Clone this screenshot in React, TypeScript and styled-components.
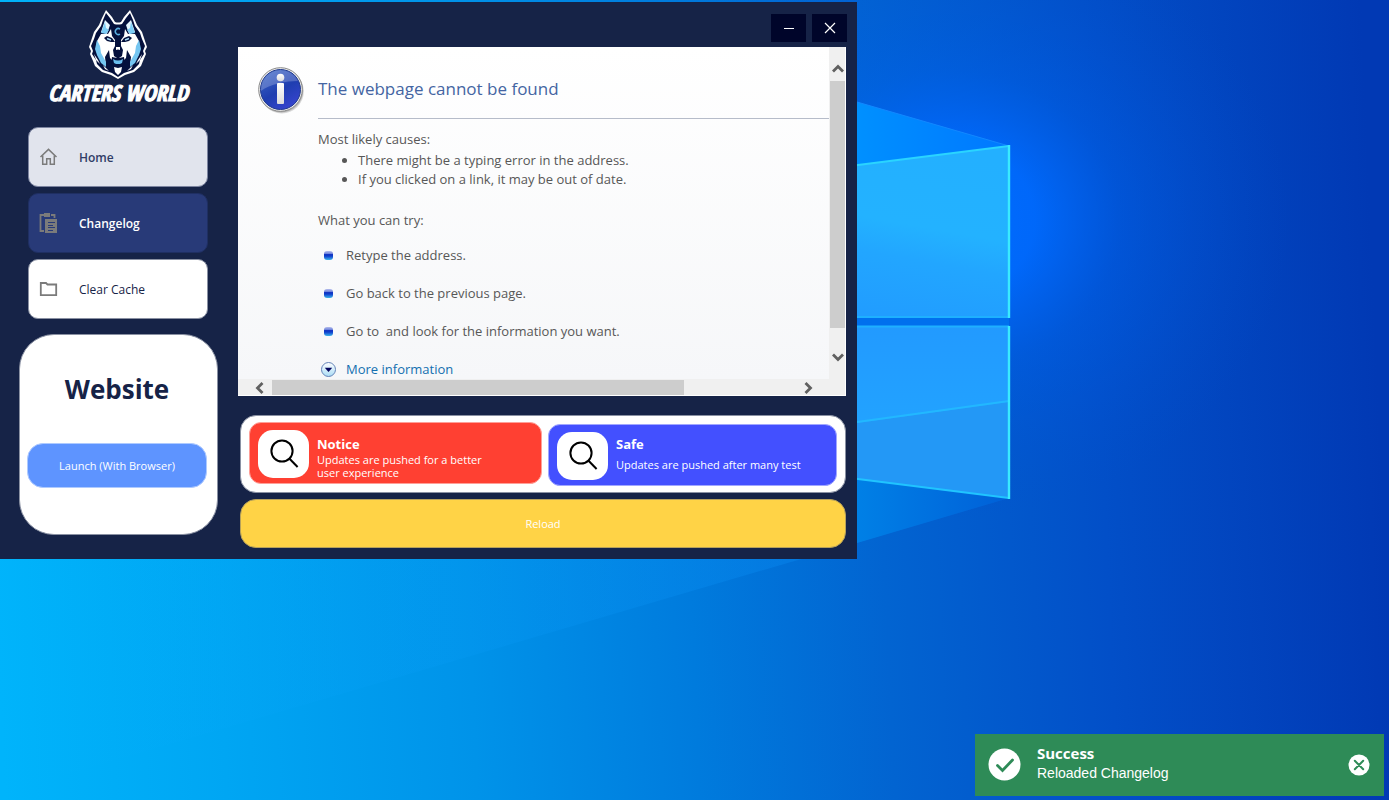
import React from 'react';
import styled, { createGlobalStyle } from 'styled-components';

const UI_FONT = '"Open Sans", "Noto Sans", sans-serif';

const GlobalStyle = createGlobalStyle`
  *, *::before, *::after { box-sizing: border-box; }
  body { margin: 0; background: #0350c8; font-family: ${UI_FONT}; }
  button { font: inherit; color: inherit; border: 0; padding: 0; background: none; cursor: pointer; }
  h1, h2, p, ul { margin: 0; padding: 0; }
`;

const Desktop = styled.main`
  position: relative;
  min-height: 100vh;
  overflow: hidden;
  display: flex;
  flex-direction: column;
  justify-content: space-between;
  align-items: flex-start;
  padding: 2px 5px 4px 0;
`;

const Wallpaper = styled.svg`
  position: absolute;
  inset: 0;
  width: 100%;
  height: 100%;
`;

const AppWindow = styled.section`
  position: relative;
  display: grid;
  grid-template-columns: 238px minmax(0, 1fr);
  width: 100%;
  max-width: 857px;
  background: #162347;
`;

const Sidebar = styled.aside`
  display: flex;
  flex-direction: column;
  align-items: center;
  padding: 8px 21px 24px 19px;
`;

const Brand = styled.div`
  display: flex;
  flex-direction: column;
  align-items: center;
  height: 117px;
`;

const BrandName = styled.h1`
  font: italic 700 22px/24px "Liberation Sans Narrow", "Open Sans Condensed", "DejaVu Sans Condensed", sans-serif;
  color: #fff;
  -webkit-text-stroke: 1px #fff;
  white-space: nowrap;
`;

const Nav = styled.nav`
  display: flex;
  flex-direction: column;
  gap: 6px;
  width: 180px;
`;

const NavButton = styled.button<{ $bg: string; $edge: string; $color: string; $bold?: boolean }>`
  display: flex;
  align-items: center;
  gap: 20px;
  height: 60px;
  padding: 0 10px;
  border: 1px solid ${p => p.$edge};
  border-radius: 10px;
  background: ${p => p.$bg};
  color: ${p => p.$color};
  font-size: 12px;
  font-weight: ${p => (p.$bold ? 600 : 400)};
`;

const SiteCard = styled.section`
  display: flex;
  flex-direction: column;
  align-items: center;
  width: 199px;
  height: 201px;
  margin-top: 15px;
  padding: 36px 8px 0 6px;
  border: 1px solid #8a91a3;
  border-radius: 35px;
  background: #fff;
`;

const SiteTitle = styled.h2`
  font-size: 26px;
  line-height: 36px;
  font-weight: 700;
  color: #162347;
  margin-bottom: 36px;
`;

const LaunchButton = styled.button`
  width: 180px;
  height: 45px;
  border: 1px solid #aecaff;
  border-radius: 16px;
  background: #5e94ff;
  color: #fff;
  font-size: 11px;
`;

const Content = styled.div`
  display: flex;
  flex-direction: column;
  padding: 12px 11px 11px 0;
`;

const Caption = styled.header`
  display: flex;
  justify-content: flex-end;
  gap: 6px;
  height: 33px;
  margin-right: -1px;
`;

const CaptionButton = styled.button`
  display: grid;
  place-items: center;
  width: 35px;
  height: 28px;
  background: #00052a;
`;

const Browser = styled.div`
  display: grid;
  grid-template-columns: minmax(0, 1fr) 16px;
  grid-template-rows: 332px 16px;
  border: solid #fff;
  border-width: 0 1px 1px 0;
  background: #f0f0f0;
`;

const Page = styled.article`
  display: grid;
  grid-template-columns: 60px minmax(0, 1fr);
  align-content: start;
  padding: 20px 0 0 20px;
  overflow: hidden;
  background: linear-gradient(#fff, #f6f7f9);
  color: #575757;
  font-size: 13px;
  line-height: 19px;
`;

const PageTitle = styled.h2`
  height: 52px;
  border-bottom: 1px solid #b6bcc9;
  margin-bottom: 11px;
  color: #4465a2;
  font-size: 17px;
  line-height: 44px;
  font-weight: 400;
`;

const PageBody = styled.div`
  grid-column: 2;
`;

const Causes = styled.ul`
  padding-left: 40px;
  margin: 2px 0 22px;
`;

const Tips = styled.ul`
  list-style: none;
  margin-top: 16px;
  display: grid;
  gap: 19px;
`;

const Tip = styled.li`
  display: flex;
  align-items: center;
  gap: 10px;
  padding-left: 2px;
  white-space: pre;

  a { color: #136fb0; text-decoration: none; }
`;

const TipMark = styled.svg`
  flex: none;
  width: 16px;
  height: 16px;
`;

const VScroll = styled.div`
  display: flex;
  flex-direction: column;
  padding: 13px 0 14px 1px;
`;

const HScroll = styled.div`
  display: flex;
  padding: 1px 13px 0 13px;
`;

const ScrollButton = styled.button`
  display: grid;
  place-items: center;
  flex: none;
  width: 15px;
  height: 17px;
`;

const ScrollStep = styled(ScrollButton)`
  width: 17px;
  height: 15px;
`;

const VThumb = styled.div`
  height: 247px;
  margin: 4px 0 auto;
  background: #cdcdcd;
`;

const HThumb = styled.div`
  flex: 0 1 412px;
  height: 15px;
  margin: 0 auto 0 4px;
  background: #cdcdcd;
`;

const Cards = styled.div`
  display: grid;
  grid-template-columns: 293fr 289fr;
  gap: 6px;
  height: 78px;
  margin: 19px 0 6px 2px;
  padding: 6px 8px;
  border: 1px solid #8a91a3;
  border-radius: 16px;
  background: #fff;
`;

const Card = styled.section<{ $bg: string; $edge: string; $drop?: boolean }>`
  display: flex;
  gap: 8px;
  height: 62px;
  margin-top: ${p => (p.$drop ? 2 : 0)}px;
  padding: 7px 8px;
  border: 1px solid ${p => p.$edge};
  border-radius: 12px;
  background: ${p => p.$bg};
  color: #fff;
`;

const CardIcon = styled.div`
  display: grid;
  place-items: center;
  flex: none;
  width: 51px;
  height: 48px;
  border-radius: 15px;
  background: #fff;
`;

const CardText = styled.div<{ $raised?: boolean }>`
  margin-top: ${p => (p.$raised ? 3 : 5)}px;
`;

const CardTitle = styled.h2`
  font-size: 13px;
  line-height: 18px;
  font-weight: 700;
`;

const CardNote = styled.p<{ $gap?: boolean }>`
  margin-top: ${p => (p.$gap ? 5 : 0)}px;
  max-width: 186px;
  font-size: 11px;
  line-height: 13px;
`;

const ReloadButton = styled.button`
  height: 49px;
  margin-left: 2px;
  border: 1px solid #b7a15a;
  border-radius: 16px;
  background: #ffd346;
  color: #fff;
  font-size: 11px;
`;

const Toast = styled.aside`
  position: relative;
  display: flex;
  align-items: center;
  align-self: flex-end;
  width: 409px;
  height: 62px;
  padding: 0 14px 1px 13px;
  background: #2e8b57;
  color: #fff;
`;

const ToastText = styled.div`
  flex: 1;
  margin-left: 16px;
  padding-bottom: 4px;
`;

const ToastTitle = styled.h2`
  font-size: 15px;
  line-height: 20px;
  font-weight: 700;
`;

const ToastNote = styled.p`
  font: 14px/20px "Liberation Sans", sans-serif;
`;

const ToastClose = styled.button`
  display: grid;
`;

const WolfLogo = () => (
  <svg width="58" height="70" viewBox="0 0 58 70" aria-hidden="true">
    <path d="M17 0 L23 7 L26 12 Q29 13 32 12 L35 7 L41 0 L45 8 L48 15 L53 22 L55 28 L58 37 L56 41 L57 44 L54 51 L52 56 L45 62 L36 65 L29 69 L22 65 L13 62 L6 56 L4 51 L1 44 L2 41 L0 37 L3 28 L5 22 L10 15 L13 8 Z" fill="#fff" />
    <path d="M17 3 L21 8 L25 14 Q29 15 33 14 L37 8 L41 3 L44 10 L46 16 L51 23 L53 29 L56 36 L54 41 L55 44 L51 50 L50 54 L44 60 L35 63 L29 67 L23 63 L14 60 L8 54 L7 50 L3 44 L4 41 L2 36 L5 29 L7 23 L12 16 L14 10 Z" fill="#04103c" />
    <path d="M16 10 L21 15 L18 24 L12 22 Z M42 10 L37 15 L40 24 L46 22 Z" fill="#e4f6ff" />
    <path d="M16 12 L17 18 L20 20 L17 24 L12 23 Z M42 12 L41 18 L38 20 L41 24 L46 23 Z" fill="#7ccdf6" />
    <path d="M12 24 L19 24 L22 19 L23 26 L26 30 L26 36 L24 40 L25 46 L28 48 H30 L33 46 L34 40 L32 36 L32 30 L35 26 L36 19 L39 24 L46 24 L50 31 L51 38 L49 46 L44 53 L41 56 L42 47 L38 40 L37 48 L34 51 H24 L21 48 L20 40 L16 47 L17 56 L14 53 L9 46 L7 38 L8 31 Z" fill="#fff" />
    <path d="M27 37 H31 V43 H27 Z" fill="#fff" />
    <path d="M8 30 L11 36 L12 43 L17 52 L17 57 L12 53 L8 45 L6 39 Z M50 30 L47 36 L46 43 L41 52 L41 57 L46 53 L50 45 L52 39 Z" fill="#75c6f1" />
    <path d="M15 28 L18 26 L23 28 L26 32 L22 32 L18 31 Z M43 28 L40 26 L35 28 L32 32 L36 32 L40 31 Z" fill="#04103c" />
    <path d="M18 28.500 L22 30 M40 28.500 L36 30" stroke="#a9dcf7" strokeWidth="1.400" />
    <path d="M25 41 Q29 38 33 41 L32 44 L29 46 L26 44 Z" fill="#04103c" />
    <path d="M23 47 L28 48 L29 47 L30 48 L35 47 L36 54 L32 57 H26 L22 54 Z" fill="#04103c" />
    <path d="M24 49 Q29 52 34 49 L33 53 L31 54 H27 L25 53 Z" fill="#69bdec" />
    <path d="M25 57 L29 58 L33 57 L32 62 L29 65 L26 62 Z M5 44 L9 50 L11 54 L7 50 Z M53 44 L49 50 L47 54 L51 50 Z M14 55 L20 61 L16 59 Z M44 55 L38 61 L42 59 Z" fill="#fff" />
    <path d="M31 19 A3 3 0 1 0 31 24" fill="none" stroke="#5aaee0" strokeWidth="1.500" />
  </svg>
);

const HomeIcon = () => (
  <svg width="20" height="20" viewBox="0 0 20 20" fill="none" stroke="#7b7b7b" strokeWidth="1.5" aria-hidden="true">
    <path d="M1.5 10 L9.5 2.4 L17.5 10" />
    <path d="M3.7 8.5 V17.2 H7.7 V11.7 H11.3 V17.2 H15.3 V8.5" />
  </svg>
);

const ChangelogIcon = () => (
  <svg width="20" height="22" viewBox="0 0 20 22" aria-hidden="true">
    <path d="M5 3 H1.5 V19 H5 M12 3 H15.5 V6" fill="none" stroke="#7b7b7b" strokeWidth="1.8" />
    <path d="M5 1 H11 V5 H5 Z M6 7 H18 V21 H6 Z" fill="#7b7b7b" />
    <path d="M9 10.5 H16 M9 13.5 H14 M9 15.5 H16 M9 18.5 H14" stroke="#283a78" />
  </svg>
);

const FolderIcon = () => (
  <svg width="20" height="20" viewBox="0 0 20 20" fill="none" stroke="#7b7b7b" strokeWidth="1.8" aria-hidden="true">
    <path d="M1.8 4 H7 L8.5 5.5 H17.2 V16.2 H1.8 Z" />
  </svg>
);

const SearchIcon = () => (
  <svg width="30" height="30" viewBox="0 0 30 30" fill="none" stroke="#000" strokeWidth="2" aria-hidden="true">
    <circle cx="13" cy="12" r="10.6" />
    <path d="M20.3 19.5 L28.6 28" />
  </svg>
);

const InfoIcon = () => (
  <svg width="48" height="48" viewBox="0 0 48 48" aria-hidden="true">
    <defs>
      <linearGradient id="infoFill" x1="0" y1="0" x2="0.6" y2="1">
        <stop offset="0" stopColor="#3f6bc8" />
        <stop offset="0.6" stopColor="#1f3eb0" />
        <stop offset="1" stopColor="#3444cc" />
      </linearGradient>
      <linearGradient id="infoGlyph" x1="0" y1="0" x2="0" y2="1">
        <stop offset="0" stopColor="#fff" />
        <stop offset="1" stopColor="#dcdcdc" />
      </linearGradient>
    </defs>
    <circle cx="23.8" cy="24.4" r="22" fill="#000" opacity="0.15" />
    <circle cx="23.2" cy="23.4" r="22" fill="#a9a9a9" opacity="0.8" />
    <circle cx="22.5" cy="22.5" r="21.8" fill="#f4f4f4" stroke="#868686" />
    <circle cx="22.5" cy="22.5" r="20" fill="url(#infoFill)" stroke="#213a8c" />
    <path d="M3 24 A19.5 19.5 0 0 1 40 14 C28 14 12 17 3 24 Z" fill="#fff" opacity="0.22" />
    <circle cx="22.5" cy="10.5" r="3.8" fill="url(#infoGlyph)" />
    <rect x="19" y="16" width="7" height="21" rx="1" fill="url(#infoGlyph)" />
  </svg>
);

const Bullet = () => (
  <TipMark viewBox="0 0 16 16" aria-hidden="true">
    <defs>
      <linearGradient id="bullet" x1="0" y1="0" x2="0" y2="1">
        <stop offset="0" stopColor="#b5bdec" />
        <stop offset="0.3" stopColor="#6d82dc" />
        <stop offset="0.4" stopColor="#0a2cc0" />
        <stop offset="0.6" stopColor="#1248d0" />
        <stop offset="1" stopColor="#3cb4ea" />
      </linearGradient>
    </defs>
    <rect x="4" y="3" width="9" height="9" rx="3" fill="url(#bullet)" />
  </TipMark>
);

const MoreIcon = () => (
  <TipMark viewBox="0 0 16 16" aria-hidden="true">
    <defs>
      <linearGradient id="moreFill" x1="0" y1="0" x2="0" y2="1">
        <stop offset="0" stopColor="#fff" />
        <stop offset="1" stopColor="#a9dbf5" />
      </linearGradient>
    </defs>
    <circle cx="8.5" cy="7.5" r="7" fill="url(#moreFill)" stroke="#6483b8" />
    <path d="M4.8 5.8 H12.2 L8.5 10 Z" fill="#04045c" />
  </TipMark>
);

const Chevron = ({ d }: { d: string }) => (
  <svg width="14" height="14" viewBox="0 0 14 14" fill="none" stroke="#606060" strokeWidth="2.8" aria-hidden="true">
    <path d={d} />
  </svg>
);

const Background = () => (
  <Wallpaper viewBox="0 0 1389 800" preserveAspectRatio="xMinYMin slice" aria-hidden="true">
    <defs>
      <linearGradient id="sky" gradientUnits="userSpaceOnUse" x1="0" y1="700" x2="1389" y2="640">
        <stop offset="0" stopColor="#00b4fb" />
        <stop offset="0.16" stopColor="#00a6f3" />
        <stop offset="0.34" stopColor="#0093e9" />
        <stop offset="0.5" stopColor="#007bdd" />
        <stop offset="0.64" stopColor="#0264d1" />
        <stop offset="0.8" stopColor="#024fc8" />
        <stop offset="1" stopColor="#0139b4" />
      </linearGradient>
      <radialGradient id="glow" gradientUnits="userSpaceOnUse" cx="0" cy="0" r="1" gradientTransform="translate(950 220) scale(340 300)">
        <stop offset="0" stopColor="#006cff" />
        <stop offset="0.25" stopColor="#006aff" stopOpacity="0.9" />
        <stop offset="0.5" stopColor="#0060f0" stopOpacity="0.4" />
        <stop offset="1" stopColor="#0050d0" stopOpacity="0" />
      </radialGradient>
      <linearGradient id="beam" gradientUnits="userSpaceOnUse" x1="0" y1="0" x2="1009" y2="0">
        <stop offset="0" stopColor="#08b4ff" stopOpacity="0" />
        <stop offset="0.8" stopColor="#0a8cf4" stopOpacity="0.35" />
        <stop offset="1" stopColor="#0a7cf0" stopOpacity="0.1" />
      </linearGradient>
      <linearGradient id="ray" gradientUnits="userSpaceOnUse" x1="857" y1="0" x2="1009" y2="0">
        <stop offset="0" stopColor="#0090ff" />
        <stop offset="1" stopColor="#0078ff" />
      </linearGradient>
      <linearGradient id="lowerRay" gradientUnits="userSpaceOnUse" x1="857" y1="0" x2="1009" y2="0">
        <stop offset="0" stopColor="#0080e6" />
        <stop offset="1" stopColor="#0060d8" />
      </linearGradient>
      <linearGradient id="upperPane" gradientUnits="userSpaceOnUse" x1="900" y1="318" x2="930" y2="150">
        <stop offset="0" stopColor="#219dff" />
        <stop offset="0.35" stopColor="#22a6ff" />
        <stop offset="0.55" stopColor="#23b2ff" />
        <stop offset="1" stopColor="#23b0ff" />
      </linearGradient>
      <linearGradient id="lowerPane" x1="0" y1="0" x2="0" y2="1">
        <stop offset="0" stopColor="#229aff" />
        <stop offset="1" stopColor="#22a9ff" />
      </linearGradient>
    </defs>
    <rect width="1389" height="800" fill="url(#sky)" />
    <rect width="1389" height="800" fill="url(#glow)" />
    <path d="M0 794 L1009 498 H0 Z" fill="url(#beam)" />
    <path d="M857 102 L1009 146 L857 166 Z" fill="url(#ray)" />
    <path d="M857 102 L1009 146" stroke="#1288ff" fill="none" />
    <path d="M857 478 L1009 498 L857 543 Z" fill="url(#lowerRay)" />
    <path d="M850 317 H1009 V327 H850 Z" fill="#0070ee" />
    <path d="M850 166 L1009 146 V317 H850 Z" fill="url(#upperPane)" />
    <path d="M850 326 H1009 V498 L850 478 Z" fill="url(#lowerPane)" />
    <path d="M850 424 L1009 402 V498 L850 478 Z" fill="#2398f6" />
    <path d="M850 423 L1009 401" stroke="#22b8ff" strokeWidth="2" />
    <path d="M850 317 H1009 M850 326.500 H1009" stroke="#1eb0ff" strokeWidth="2" />
    <path d="M850 166 L1009 146" stroke="#2ad4ff" strokeWidth="2" />
    <path d="M850 478 L1009 498" stroke="#20c4ff" strokeWidth="2" />
    <path d="M1009 145 V318 M1009 326 V499" stroke="#3aeaff" strokeWidth="2.4" />
  </Wallpaper>
);

export default function App() {
  return (
    <>
      <GlobalStyle />
      <Desktop>
        <Background />
        <AppWindow aria-label="Carters World">
          <Sidebar>
            <Brand>
              <WolfLogo />
              <BrandName>CARTERS WORLD</BrandName>
            </Brand>
            <Nav>
              <NavButton $bg="#e1e4ed" $edge="#7c84a0" $color="#2f3c66" $bold>
                <HomeIcon />
                Home
              </NavButton>
              <NavButton $bg="#283a78" $edge="#1f2f62" $color="#fff" $bold>
                <ChangelogIcon />
                Changelog
              </NavButton>
              <NavButton $bg="#fff" $edge="#8a91a3" $color="#162347">
                <FolderIcon />
                Clear Cache
              </NavButton>
            </Nav>
            <SiteCard>
              <SiteTitle>Website</SiteTitle>
              <LaunchButton>Launch (With Browser)</LaunchButton>
            </SiteCard>
          </Sidebar>
          <Content>
            <Caption>
              <CaptionButton aria-label="Minimize">
                <svg width="12" height="12" viewBox="0 0 12 12" aria-hidden="true">
                  <path d="M1 6.500 H11" stroke="#fff" />
                </svg>
              </CaptionButton>
              <CaptionButton aria-label="Close">
                <svg width="12" height="12" viewBox="0 0 12 12" aria-hidden="true">
                  <path d="M1 1 L11 11 M11 1 L1 11" stroke="#fff" strokeWidth="1.200" />
                </svg>
              </CaptionButton>
            </Caption>
            <Browser>
              <Page>
                <InfoIcon />
                <PageTitle>The webpage cannot be found</PageTitle>
                <PageBody>
                  <p>Most likely causes:</p>
                  <Causes>
                    <li>There might be a typing error in the address.</li>
                    <li>If you clicked on a link, it may be out of date.</li>
                  </Causes>
                  <p>What you can try:</p>
                  <Tips>
                    <Tip><Bullet />Retype the address.</Tip>
                    <Tip><Bullet />Go back to the previous page.</Tip>
                    <Tip><Bullet />{'Go to  and look for the information you want.'}</Tip>
                    <Tip><MoreIcon /><a href="#more">More information</a></Tip>
                  </Tips>
                </PageBody>
              </Page>
              <VScroll>
                <ScrollButton aria-label="Scroll up"><Chevron d="M2 9.500 L7 4.500 L12 9.500" /></ScrollButton>
                <VThumb />
                <ScrollButton aria-label="Scroll down"><Chevron d="M2 4.500 L7 9.500 L12 4.500" /></ScrollButton>
              </VScroll>
              <HScroll>
                <ScrollStep aria-label="Scroll left"><Chevron d="M9.500 2 L4.500 7 L9.500 12" /></ScrollStep>
                <HThumb />
                <ScrollStep aria-label="Scroll right"><Chevron d="M4.500 2 L9.500 7 L4.500 12" /></ScrollStep>
              </HScroll>
            </Browser>
            <Cards>
              <Card $bg="#ff4032" $edge="#ff9f98">
                <CardIcon><SearchIcon /></CardIcon>
                <CardText>
                  <CardTitle>Notice</CardTitle>
                  <CardNote>Updates are pushed for a better user experience</CardNote>
                </CardText>
              </Card>
              <Card $bg="#4350ff" $edge="#a1a7ff" $drop>
                <CardIcon><SearchIcon /></CardIcon>
                <CardText $raised>
                  <CardTitle>Safe</CardTitle>
                  <CardNote $gap>Updates are pushed after many test</CardNote>
                </CardText>
              </Card>
            </Cards>
            <ReloadButton>Reload</ReloadButton>
          </Content>
        </AppWindow>
        <Toast role="status">
          <svg width="33" height="33" viewBox="0 0 33 33" aria-hidden="true">
            <circle cx="16.500" cy="16.500" r="16" fill="#fff" />
            <path d="M9.500 17.500 L14.500 22.500 L24.500 12" fill="none" stroke="#2e8b57" strokeWidth="2.800" strokeLinecap="round" />
          </svg>
          <ToastText>
            <ToastTitle>Success</ToastTitle>
            <ToastNote>Reloaded Changelog</ToastNote>
          </ToastText>
          <ToastClose aria-label="Dismiss">
            <svg width="22" height="22" viewBox="0 0 22 22" aria-hidden="true">
              <circle cx="11" cy="11" r="10.500" fill="#fff" />
              <path d="M6.800 6.800 L15.200 15.200 M15.200 6.800 L6.800 15.200" stroke="#2e8b57" strokeWidth="2" strokeLinecap="round" />
            </svg>
          </ToastClose>
        </Toast>
      </Desktop>
    </>
  );
}
